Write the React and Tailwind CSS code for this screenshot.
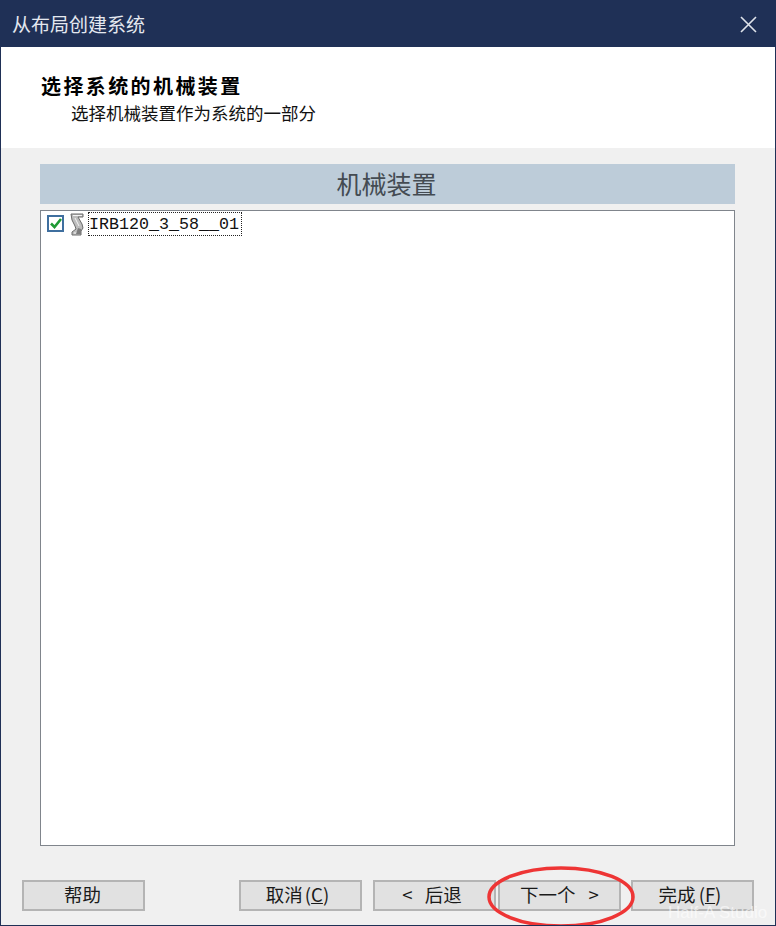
import React from 'react';

const cjk = { fontFamily: '"Noto Sans CJK SC", sans-serif' };

const WizardButton = ({ className = '', children }) => (
  <button
    type="button"
    className={`h-[31px] w-[123px] shrink-0 flex items-center justify-center border-2 border-[#b4b4b4] bg-[#e1e1e1] pb-[3px] text-[18.5px] leading-none text-[#1a1a1a] ${className}`}
  >
    {children}
  </button>
);

const RobotIcon = () => (
  <svg width="15" height="23" viewBox="0 0 15 23" className="shrink-0">
    <path d="M1 1h12v3H8l4 7 1 4-2 3v4H2v-3l4-3-1-3-3-6z" fill="#bdbdbd" stroke="#6a6a6a" strokeWidth="1" />
    <path d="M3 2.5h9M5 5l4 8M4 20h6" stroke="#f4f4f4" strokeWidth="1" fill="none" />
    <path d="M8 15l3 1v5H6z" fill="#7d7d7d" />
  </svg>
);

const App = () => {
  return (
    <div
      className="relative w-[776px] h-[926px] overflow-hidden flex flex-col border border-[#1f3056] bg-[#f0f0f0]"
      style={cjk}
    >
      {/* title bar */}
      <div className="h-[46px] shrink-0 flex items-center justify-between bg-[#1f3056] pl-[11px] pr-[18px]">
        <span className="text-[19px] text-[#e4e8f0]">从布局创建系统</span>
        <svg width="17" height="17" viewBox="0 0 17 17">
          <path d="M1 1l15 15M16 1L1 16" stroke="#dfe3ea" strokeWidth="1.6" fill="none" />
        </svg>
      </div>

      {/* header */}
      <div className="h-[101px] shrink-0 bg-white pt-[25px] pl-[40px]">
        <div className="text-[20px] leading-[28px] font-bold tracking-[2.4px] text-black">选择系统的机械装置</div>
        <div className="pl-[30px] text-[17.5px] leading-[26px] text-[#111]">选择机械装置作为系统的一部分</div>
      </div>

      {/* body */}
      <div className="flex-1 flex flex-col pt-[16px] pl-[39px] pr-[40px]">
        <div className="h-[40px] shrink-0 flex items-center justify-center bg-[#bdccd9] pr-[2px] text-[25px] text-[#444b52]">
          机械装置
        </div>
        <div className="mt-[6px] h-[636px] shrink-0 border border-[#80858c] bg-white pl-[6px] pt-[1px]">
          <div className="flex items-center">
            <span className="w-[17px] h-[17px] mt-[-2px] shrink-0 flex items-center justify-center border-2 border-[#3f6f9f] bg-white">
              <svg width="12" height="11" viewBox="0 0 12 11">
                <path d="M1 5.5l3.5 3.5 6.5-8" stroke="#1f9a35" strokeWidth="2.6" fill="none" />
              </svg>
            </span>
            <span className="ml-[6px] flex">
              <RobotIcon />
            </span>
            <span
              className="ml-[3px] h-[24px] w-[154px] flex items-center pt-[1px] border border-dotted border-[#222] text-[16.67px] whitespace-nowrap text-[#111]"
              style={{ fontFamily: '"Liberation Mono", monospace' }}
            >
              IRB120_3_58__01
            </span>
          </div>
        </div>

        {/* footer buttons */}
        <div className="mt-[34px] flex items-center ml-[-18px] mr-[-20px]">
          <WizardButton className="pr-[2px]">帮助</WizardButton>
          <WizardButton className="ml-[94px] pr-[6px]">
            <span>取消</span>
            <span className="ml-[2px]">(<span className="underline">C</span>)</span>
          </WizardButton>
          <WizardButton className="ml-[11px] pr-[5px]">
            <span className="mr-[12px]">&lt;</span>后退
          </WizardButton>
          <WizardButton className="ml-[2px]">
            下一个<span className="ml-[13px]">&gt;</span>
          </WizardButton>
          <WizardButton className="ml-[10px] pr-[5px]">
            <span>完成</span>
            <span className="ml-[3px]">(<span className="underline">F</span>)</span>
          </WizardButton>
        </div>
      </div>

      {/* red annotation ellipse */}
      <svg width="152" height="66" viewBox="0 0 152 66" className="absolute left-[485px] top-[864px]">
        <ellipse cx="75" cy="32" rx="72" ry="29" stroke="#ee3535" strokeWidth="3.5" fill="none" />
      </svg>

      {/* watermark */}
      <span
        className="absolute left-[667px] top-[899px] text-[17px] text-white/60"
        style={{ fontFamily: '"Liberation Sans", sans-serif' }}
      >
        Half-A Studio
      </span>
    </div>
  );
};

export default App;
